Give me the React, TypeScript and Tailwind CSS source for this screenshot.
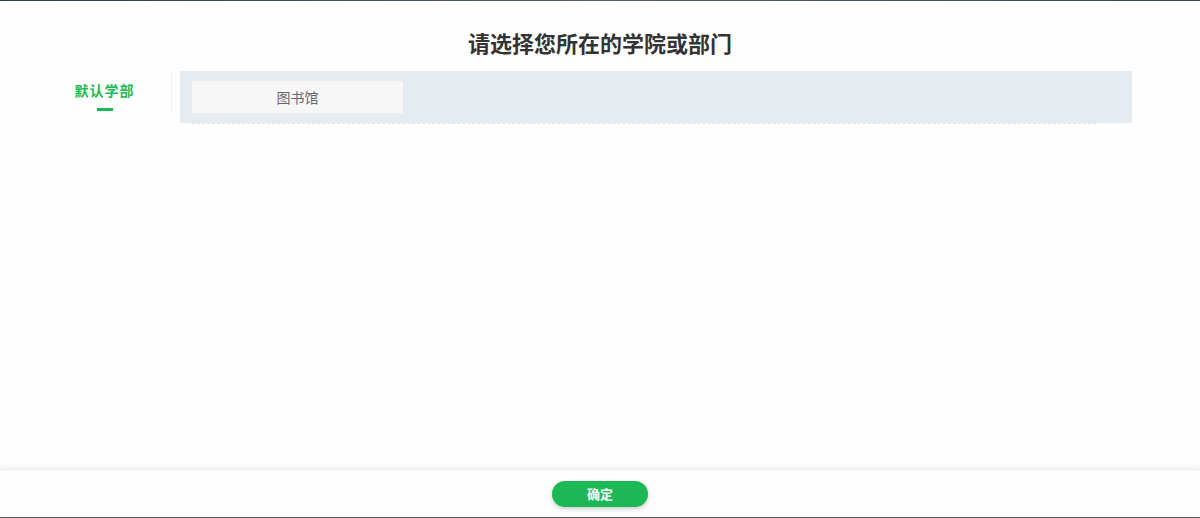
import React from 'react';

const font = { fontFamily: '"Noto Sans CJK SC", "Noto Sans", sans-serif' };

const App: React.FC = () => {
  return (
    <div className="h-[518px] w-[1200px] overflow-hidden bg-[#5a5a5a] pb-px" style={font}>
      <div className="h-px w-full bg-gradient-to-r from-[#2f3b42] via-[#56606a] to-[#3a444c]" />
      <div className="flex h-[516px] flex-col bg-[#fefefe]">
        <h2 className="pt-[25px] text-center text-[22px] font-bold leading-[32px] text-[#333]">
          请选择您所在的学院或部门
        </h2>

        <div className="mt-[13px] flex flex-1">
          {/* tabs */}
          <div className="flex h-[40px] w-[172px] shrink-0 flex-col items-center border-r border-[#f0f0f0] pt-[9px] pl-[38px]">
            <span className="text-[14px] font-bold leading-[20px] tracking-[1px] text-[#1cb955]">默认学部</span>
            <span className="mt-[8px] h-[3px] w-[16px] bg-[#1cb955]" />
          </div>

          {/* list */}
          <div className="ml-[8px] w-[952px]">
            <div className="bg-[#e6ebef] px-[12px] pt-[10px] pb-[10px]">
              <div className="flex h-[32px] w-[211px] items-center justify-center bg-[#f7f7f7] text-[14px] text-[#666]">
                图书馆
              </div>
            </div>
            <div className="mx-[12px] w-[904px] border-t border-dashed border-[#e2e6ea]" />
          </div>
        </div>

        <div className="flex h-[48px] items-center justify-center border-t border-[#ececec] bg-[#fefefe] shadow-[0_-2px_6px_rgba(0,0,0,0.06)]">
          <button className="h-[26px] w-[96px] rounded-full bg-[#1bb855] text-[13px] font-bold text-white shadow-[0_2px_4px_rgba(0,0,0,0.2)]">
            确定
          </button>
        </div>
      </div>
    </div>
  );
};

export default App;
